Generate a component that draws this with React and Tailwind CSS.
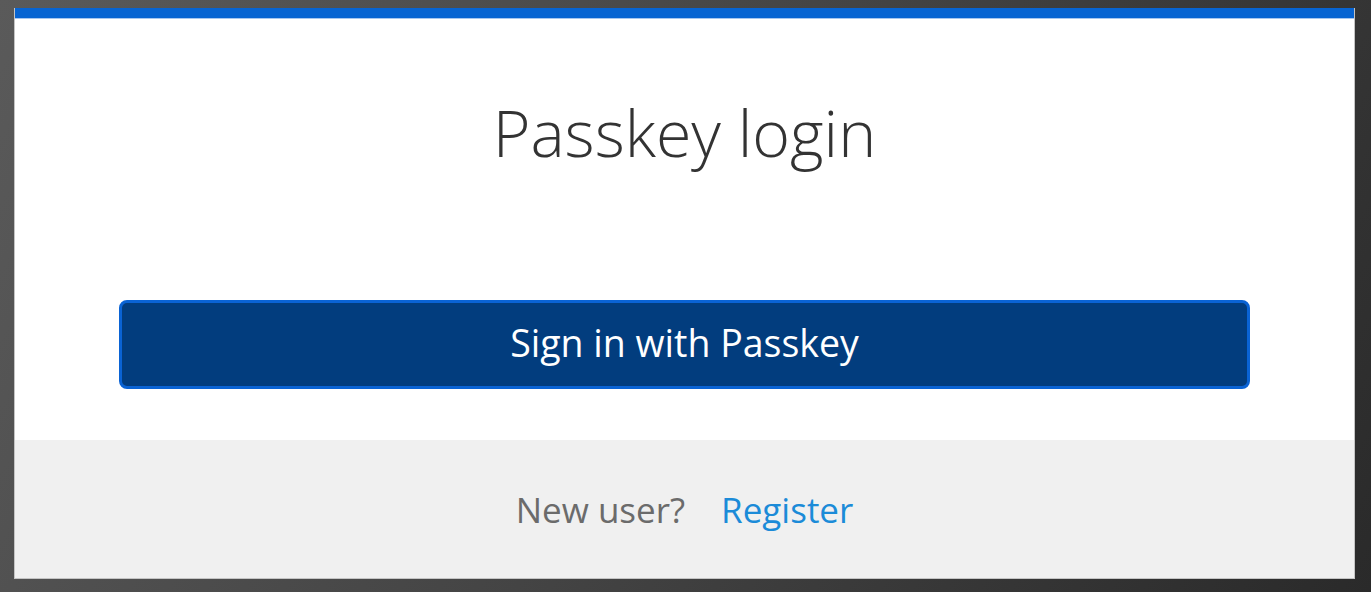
export default function App() {
  return (
    <div className="w-[1371px] h-[592px] overflow-hidden bg-[linear-gradient(120deg,#5a5a5a_0%,#444_50%,#2a2a2a_100%)] pl-[14px] pt-[8px]" style={{ fontFamily: '"Open Sans", sans-serif' }}>
      <div className="w-[1341px] h-[571px] flex flex-col border-x border-b border-[#c4c4c4] bg-white">
        <div className="h-[10px] bg-[#0764d2] shrink-0" />
        <div className="h-[1px] bg-[#a7c6ef] shrink-0" />
        <div className="h-[421px] flex flex-col items-center shrink-0">
          <h1 className="mt-[70px] text-[64.5px] leading-[86px] font-light text-[#333]">Passkey login</h1>
          <button className="mt-[125px] w-[1131px] h-[89px] rounded-[8px] border-[3px] border-[#0a63d4] bg-[#023d7e] text-white text-[37.5px] leading-none pb-[3px]">
            Sign in with Passkey
          </button>
        </div>
        <div className="flex-1 bg-[#f0f0f0] flex items-center justify-center gap-[36px] pt-[2px]">
          <span className="text-[35px] text-[#6b6b6b]">New user?</span>
          <a className="text-[35px] text-[#1b8bd8]">Register</a>
        </div>
      </div>
    </div>
  );
}
